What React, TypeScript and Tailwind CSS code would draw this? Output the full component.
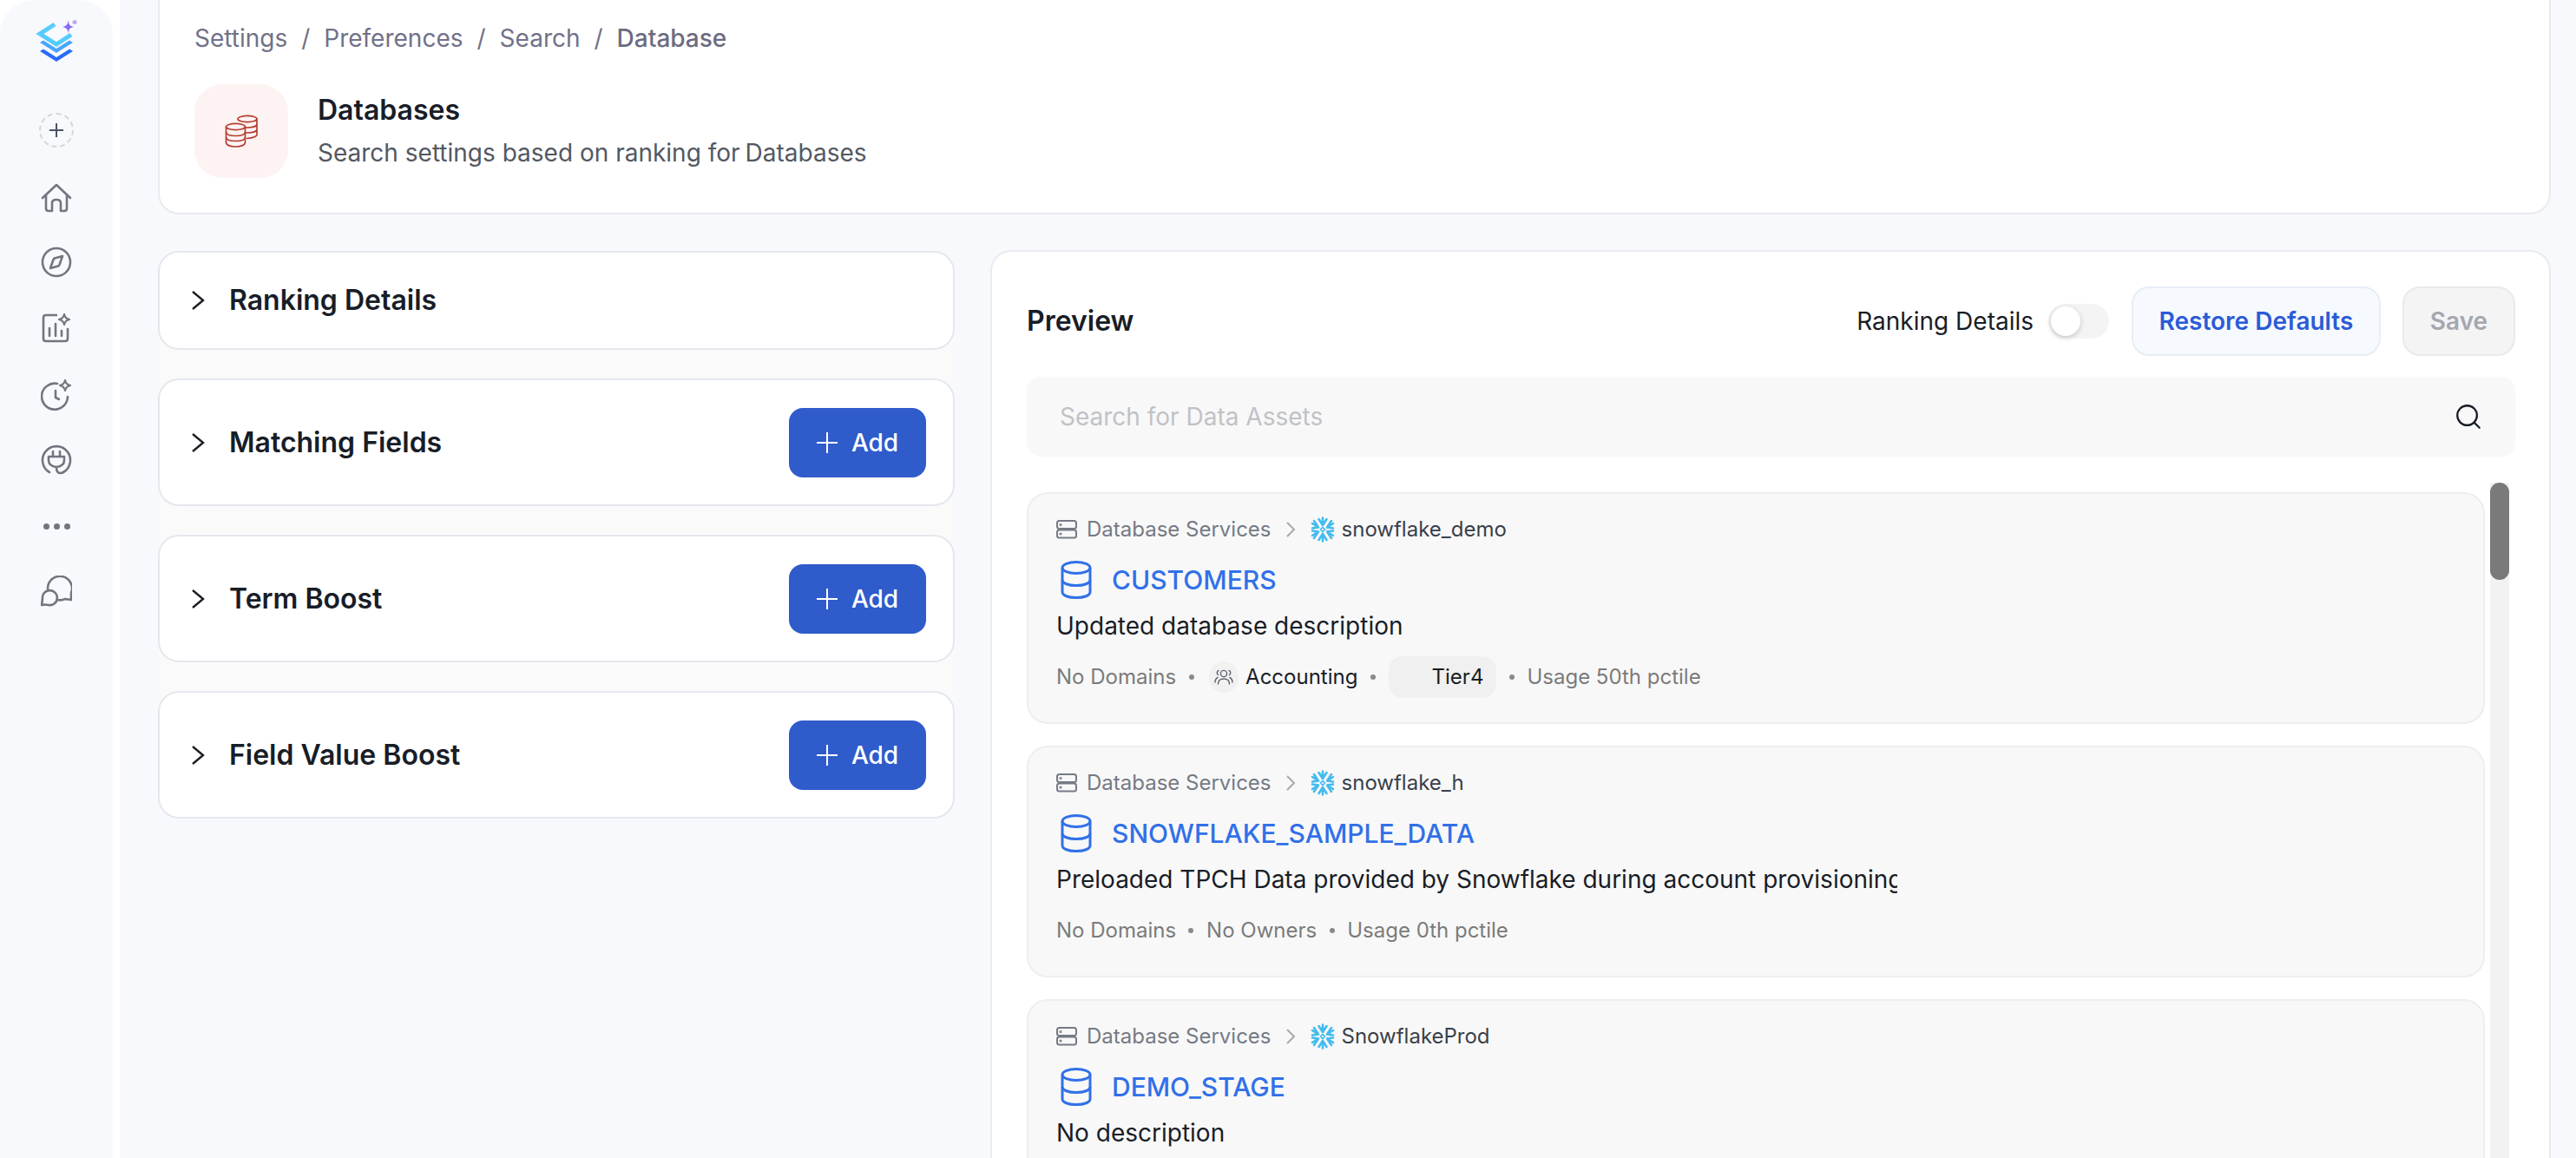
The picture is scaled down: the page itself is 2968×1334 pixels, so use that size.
import React from 'react';
import { Search } from 'lucide-react';

const gray = '#71767f';

const Logo = () => (
  <svg width="60" height="56" viewBox="0 0 60 56" fill="none">
    <path d="M22 6 L5 17 L24 29 L41 18" stroke="#55cdfc" strokeWidth="5" />
    <path d="M5 27 L9 24.5 L24 34 L39 24.5 L43 27 L24 39 Z" fill="#4aa5ff" />
    <path d="M5 37 L9 34.5 L24 44 L39 34.5 L43 37 L24 49 Z" fill="#2a6bfb" />
    <path d="M38 1 C38 6 39 8 44 9 C39 10 38 12 38 17 C37 12 36 10 31 9 C36 8 37 6 38 1 Z" fill="#8a6bf5" />
    <circle cx="45" cy="3.5" r="2.5" fill="#c4a6f8" />
  </svg>
);

const Home = () => (
  <svg width="36" height="34" viewBox="0 0 36 34" fill="none" stroke={gray} strokeWidth="2.6" strokeLinejoin="round" strokeLinecap="round">
    <path d="M2 17 L18 2 L34 17" />
    <path d="M6 14 V29 Q6 32 9 32 H13 V23 Q13 19 18 19 Q23 19 23 23 V32 H27 Q30 32 30 29 V14" />
  </svg>
);

const Compass = () => (
  <svg width="36" height="36" viewBox="0 0 36 36" fill="none" stroke={gray} strokeWidth="2.6" strokeLinejoin="round">
    <circle cx="18" cy="18" r="16" />
    <path d="M25 11 L21.5 21 Q21 22 20 22.5 L11 25 L14.5 15 Q15 14 16 13.5 Z" />
  </svg>
);

const ChartSpark = () => (
  <svg width="34" height="34" viewBox="0 0 34 34" fill="none" stroke={gray} strokeWidth="2.6" strokeLinecap="round" strokeLinejoin="round">
    <path d="M17 2 H5 Q2 2 2 5 V29 Q2 32 5 32 H27 Q30 32 30 29 V18" />
    <path d="M9 17 V26 M16 12 V26 M23 20 V26" />
    <path d="M26 1 Q27 6 32 7 Q27 8 26 13 Q25 8 20 7 Q25 6 26 1 Z" strokeWidth="2.2" />
  </svg>
);

const ClockSpark = () => (
  <svg width="36" height="36" viewBox="0 0 36 36" fill="none" stroke={gray} strokeWidth="2.6" strokeLinecap="round" strokeLinejoin="round">
    <path d="M19 5 A15 15 0 1 0 31 20" />
    <path d="M17 13 V21 L21 23" />
    <path d="M28 1 Q29 6 34 7 Q29 8 28 13 Q27 8 22 7 Q27 6 28 1 Z" strokeWidth="2.2" />
  </svg>
);

const PlugCircle = () => (
  <svg width="36" height="36" viewBox="0 0 36 36" fill="none" stroke={gray} strokeWidth="2.6" strokeLinecap="round" strokeLinejoin="round">
    <path d="M10 32 A16 16 0 1 1 26 32" />
    <path d="M9 14 H27 V18 Q27 25 18 26 Q9 25 9 18 Z" />
    <path d="M14 8 V14 M22 8 V14" />
    <path d="M18 26 Q18 33 22 33 Q25 33 26 32" />
  </svg>
);

const Chat = () => (
  <svg width="36" height="36" viewBox="0 0 36 36" fill="none" stroke={gray} strokeWidth="2.6" strokeLinecap="round" strokeLinejoin="round">
    <path d="M8 15 A14 14 0 1 1 35 20 L35 28 L28 27 Q24 29 19 28" />
    <path d="M1 34 L2 27 A8.5 8.5 0 1 1 9 34 Q5 33 1 34 Z" />
  </svg>
);

const Coins = () => (
  <svg width="38" height="38" viewBox="0 0 38 38" fill="none" stroke="#b53e30" strokeWidth="1.7">
    <ellipse cx="26" cy="5" rx="11" ry="3.6" />
    <path d="M37 5 V23 C37 25 33 27 25 27.5 M37 11 C37 13 33 15 24 15 M37 17 C37 19 33 21 24 21" />
    <ellipse cx="12.5" cy="14" rx="11" ry="3.6" fill="#fdf3f2" />
    <path d="M1.5 14 V32 C1.5 35 6 37 12.5 37 C19 37 23.5 35 23.5 32 V14" />
    <path d="M1.5 20 C1.5 23 6 24.5 12.5 24.5 C19 24.5 23.5 23 23.5 20 M1.5 26 C1.5 29 6 30.5 12.5 30.5 C19 30.5 23.5 29 23.5 26" />
  </svg>
);

const Chevron = () => (
  <svg width="16" height="22" viewBox="0 0 16 22" fill="none" stroke="#1a1d23" strokeWidth="2.4">
    <path d="M2 1 L14 11 L2 21" />
  </svg>
);

const Server = () => (
  <svg width="24" height="22" viewBox="0 0 24 22" fill="none" stroke="#757a85" strokeWidth="2">
    <rect x="1" y="1" width="22" height="9" rx="2.5" />
    <rect x="1" y="11.5" width="22" height="9" rx="2.5" />
    <circle cx="5" cy="5.5" r="0.6" />
    <circle cx="5" cy="16" r="0.6" />
  </svg>
);

const DbIcon = () => (
  <svg width="36" height="44" viewBox="0 0 36 44" fill="none" stroke="#3170e8" strokeWidth="3">
    <ellipse cx="18" cy="8" rx="16" ry="6.5" />
    <path d="M2 8 V36 C2 40 9 42.5 18 42.5 C27 42.5 34 40 34 36 V8" />
    <path d="M2 22 C2 26 9 28.5 18 28.5 C27 28.5 34 26 34 22" />
  </svg>
);

const Snowflake = () => (
  <svg width="28" height="30" viewBox="0 0 28 30" fill="none" stroke="#45bbee" strokeWidth="2.6" strokeLinecap="round">
    <path d="M14 1.5 V10 M9.5 3 L14 10 M18.5 3 L14 10" />
    <path d="M14 28.5 V20 M9.5 27 L14 20 M18.5 27 L14 20" />
    <path d="M2 8 L9 12.5 M2 13.5 L9 12.5 M4 5 L9 12.5" />
    <path d="M26 8 L19 12.5 M26 13.5 L19 12.5 M24 5 L19 12.5" />
    <path d="M2 22 L9 17.5 M2 16.5 L9 17.5 M4 25 L9 17.5" />
    <path d="M26 22 L19 17.5 M26 16.5 L19 17.5 M24 25 L19 17.5" />
    <path d="M14 12.5 L16.5 15 L14 17.5 L11.5 15 Z" strokeWidth="1.6" />
  </svg>
);

const Team = () => (
  <svg width="22" height="20" viewBox="0 0 22 20" fill="none" stroke="#5f6570" strokeWidth="1.4" strokeLinecap="round">
    <circle cx="11" cy="6" r="3.6" />
    <path d="M4.5 18 C4.5 14 7 12 11 12 C15 12 17.5 14 17.5 18" />
    <path d="M5 2.5 C3 3 2.5 6 4.5 7.5 M17 2.5 C19 3 19.5 6 17.5 7.5 M1 16 C1 13 2 11.5 4 10.5 M21 16 C21 13 20 11.5 18 10.5" />
  </svg>
);

const Dot = ({ className }: { className: string }) => <span className={`block w-[6px] h-[6px] rounded-full bg-[#8a8a8a] shrink-0 ${className}`} />;

const accordions = [
  { title: 'Ranking Details', add: false },
  { title: 'Matching Fields', add: true },
  { title: 'Term Boost', add: true },
  { title: 'Field Value Boost', add: true },
];

const AccordionCard = ({ title, add }: { title: string; add: boolean }) => (
  <div className={`flex items-center justify-between bg-white border-2 border-[#e4e8ee] rounded-[24px] pl-[36px] pr-[31px] ${add ? 'h-[147px]' : 'h-[114px]'}`}>
    <div className="flex items-center gap-[28px]">
      <Chevron />
      <span className="text-[32px] font-semibold text-[#181d27]">{title}</span>
    </div>
    {add && (
      <button className="w-[158px] h-[80px] rounded-[16px] bg-[#2f5bcb] text-white text-[28px] font-medium flex items-center justify-center gap-[16px]">
        <svg width="24" height="24" viewBox="0 0 24 24" stroke="#fff" strokeWidth="2"><path d="M12 0 V24 M0 12 H24" /></svg>
        Add
      </button>
    )}
  </div>
);

const AssetCard = ({ service, name, desc, children, descClip }: { service: string; name: string; desc: string; descClip?: boolean; children?: React.ReactNode }) => (
  <div className="h-[267px] shrink-0 bg-[#f8f8f8] border-2 border-[#eceef3] rounded-[24px] px-[32px] pt-[27px]">
    <div className="flex items-center h-[28px] text-[24px]">
      <Server />
      <span className="ml-[11px] text-[#757a85]">Database Services</span>
      <svg className="ml-[16px]" width="12" height="18" viewBox="0 0 12 18" fill="none" stroke="#a6a9b0" strokeWidth="2"><path d="M2 1 L10 9 L2 17" /></svg>
      <span className="ml-[17px]"><Snowflake /></span>
      <span className="ml-[8px] text-[#3a3f49]">{service}</span>
    </div>
    <div className="flex items-center h-[44px] mt-[22px]">
      <span className="ml-[5px]"><DbIcon /></span>
      <span className="ml-[23px] text-[30px] font-medium text-[#3170e8]">{name}</span>
    </div>
    <div className={`mt-[11px] h-[40px] leading-[40px] text-[28px] text-[#181d27] overflow-hidden whitespace-nowrap ${descClip ? 'w-[969px]' : ''}`}>{desc}</div>
    {children && <div className="mt-[15px] h-[48px] flex items-center text-[24px] text-[#7b7b7b]">{children}</div>}
  </div>
);

export default function App() {
  return (
    <div className="flex w-[2968px] h-[1334px] overflow-hidden bg-white font-[family-name:Inter,sans-serif]">
      <aside className="w-[130px] shrink-0 bg-[#f8f9fd] rounded-t-[40px] flex flex-col items-center">
        <div className="h-[116px] pt-[22px] pl-[12px]"><Logo /></div>
        <div className="w-[40px] h-[40px] mt-[14px] rounded-full border-2 border-dashed border-[#d5d7da] flex items-center justify-center">
          <svg width="18" height="18" viewBox="0 0 18 18" stroke="#4b5563" strokeWidth="2"><path d="M9 1 V17 M1 9 H17" /></svg>
        </div>
        <div className="mt-[39px] h-[38px] flex items-center"><Home /></div>
        <div className="mt-[36px] h-[38px] flex items-center"><Compass /></div>
        <div className="mt-[38px] h-[38px] flex items-center"><ChartSpark /></div>
        <div className="mt-[39px] h-[38px] flex items-center"><ClockSpark /></div>
        <div className="mt-[37px] h-[38px] flex items-center"><PlugCircle /></div>
        <div className="mt-[38px] h-[38px] flex items-center gap-[5px]">
          <span className="w-[7px] h-[7px] rounded-full bg-[#71767f]" />
          <span className="w-[7px] h-[7px] rounded-full bg-[#71767f]" />
          <span className="w-[7px] h-[7px] rounded-full bg-[#71767f]" />
        </div>
        <div className="mt-[37px] h-[38px] flex items-center"><Chat /></div>
      </aside>

      <main className="ml-[8px] flex-1 bg-[#f8f9fc] pl-[44px] pr-[29px] flex flex-col min-w-0">
        <header className="h-[247px] shrink-0 bg-white border-x-2 border-b-2 border-[#e9ebf0] rounded-b-[24px] px-[40px] pt-[24px]">
          <div className="flex items-center gap-[16px] h-[40px] text-[28px] text-[#717189]">
            <span>Settings</span>
            <span>/</span>
            <span>Preferences</span>
            <span>/</span>
            <span>Search</span>
            <span>/</span>
            <span className="font-medium text-[#6b6b82]">Database</span>
          </div>
          <div className="flex mt-[33px]">
            <div className="w-[108px] h-[108px] rounded-[32px] bg-[#fdf3f2] flex items-center justify-center"><Coins /></div>
            <div className="ml-[34px] pt-[10px]">
              <div className="h-[40px] leading-[40px] text-[32px] font-semibold text-[#181d27]">Databases</div>
              <div className="mt-[9px] h-[40px] leading-[40px] text-[28px] text-[#535862]">Search settings based on ranking for<span className="ml-[6px]">Databases</span></div>
            </div>
          </div>
        </header>

        <div className="flex flex-1 mt-[41px] min-h-0">
          <div className="w-[918px] shrink-0 pt-[1px]">
            <div className="flex flex-col gap-[33px] bg-[#fafafa] rounded-[24px]">
              {accordions.map((a) => <AccordionCard key={a.title} title={a.title} add={a.add} />)}
            </div>
          </div>

          <section className="ml-[41px] flex-1 bg-white border-x-2 border-t-2 border-[#e9ebf0] rounded-t-[24px] pl-[40px] pr-[39px] pt-[40px] flex flex-col min-w-0">
            <div className="flex items-center h-[80px] shrink-0">
              <span className="text-[32px] font-semibold text-[#181d27]">Preview</span>
              <span className="ml-auto text-[28px] text-[#181d27]">Ranking Details</span>
              <div className="ml-[17px] w-[70px] h-[40px] rounded-full bg-[#f4f4f4] flex items-center pl-[3px]">
                <span className="w-[34px] h-[34px] rounded-full bg-white shadow-[0_2px_6px_rgba(0,0,0,0.2)]" />
              </div>
              <button className="ml-[26px] w-[287px] h-[80px] rounded-[20px] bg-[#f6f9fe] border-2 border-[#e8ecf4] text-[28px] font-semibold text-[#2b5bd7]">Restore Defaults</button>
              <button className="ml-[25px] w-[130px] h-[80px] rounded-[20px] bg-[#f4f4f5] border-2 border-[#e9eaee] text-[28px] font-semibold text-[#a4a7ae]">Save</button>
            </div>

            <div className="mt-[24px] h-[92px] shrink-0 rounded-[16px] bg-[#f8f8f8] flex items-center pl-[38px] pr-[37px]">
              <input placeholder="Search for Data Assets" className="flex-1 bg-transparent text-[28px] outline-none placeholder:text-[#c0c2c7]" />
              <Search size={34} strokeWidth={1.6} color="#181d27" />
            </div>

            <div className="mt-[30px] flex-1 flex min-h-0">
              <div className="w-[1680px] shrink-0 pt-[11px] flex flex-col gap-[25px]">
                <AssetCard service="snowflake_demo" name="CUSTOMERS" desc="Updated database description">
                  <span>No Domains</span>
                  <Dot className="ml-[15px]" />
                  <span className="ml-[17px] w-[34px] h-[36px] rounded-full bg-[#f1f1f1] flex items-center justify-center"><Team /></span>
                  <span className="ml-[8px] text-[#181d27]">Accounting</span>
                  <Dot className="ml-[15px]" />
                  <span className="ml-[15px] w-[124px] h-[48px] rounded-[16px] bg-[#f0f0f0] flex items-center justify-end pr-[15px] text-[#181d27]">Tier4</span>
                  <Dot className="ml-[15px]" />
                  <span className="ml-[14px]">Usage 50th pctile</span>
                </AssetCard>
                <AssetCard service="snowflake_h" name="SNOWFLAKE_SAMPLE_DATA" desc="Preloaded TPCH Data provided by Snowflake during account provisioning" descClip>
                  <span>No Domains</span>
                  <Dot className="ml-[14px]" />
                  <span className="ml-[15px]">No Owners</span>
                  <Dot className="ml-[15px]" />
                  <span className="ml-[14px]">Usage 0th pctile</span>
                </AssetCard>
                <AssetCard service="SnowflakeProd" name="DEMO_STAGE" desc="No description" />
              </div>
              <div className="ml-[6px] w-[22px] shrink-0 bg-[#f2f2f2]">
                <div className="h-[112px] rounded-full bg-[#7a7a7a]" />
              </div>
            </div>
          </section>
        </div>
      </main>
    </div>
  );
}
